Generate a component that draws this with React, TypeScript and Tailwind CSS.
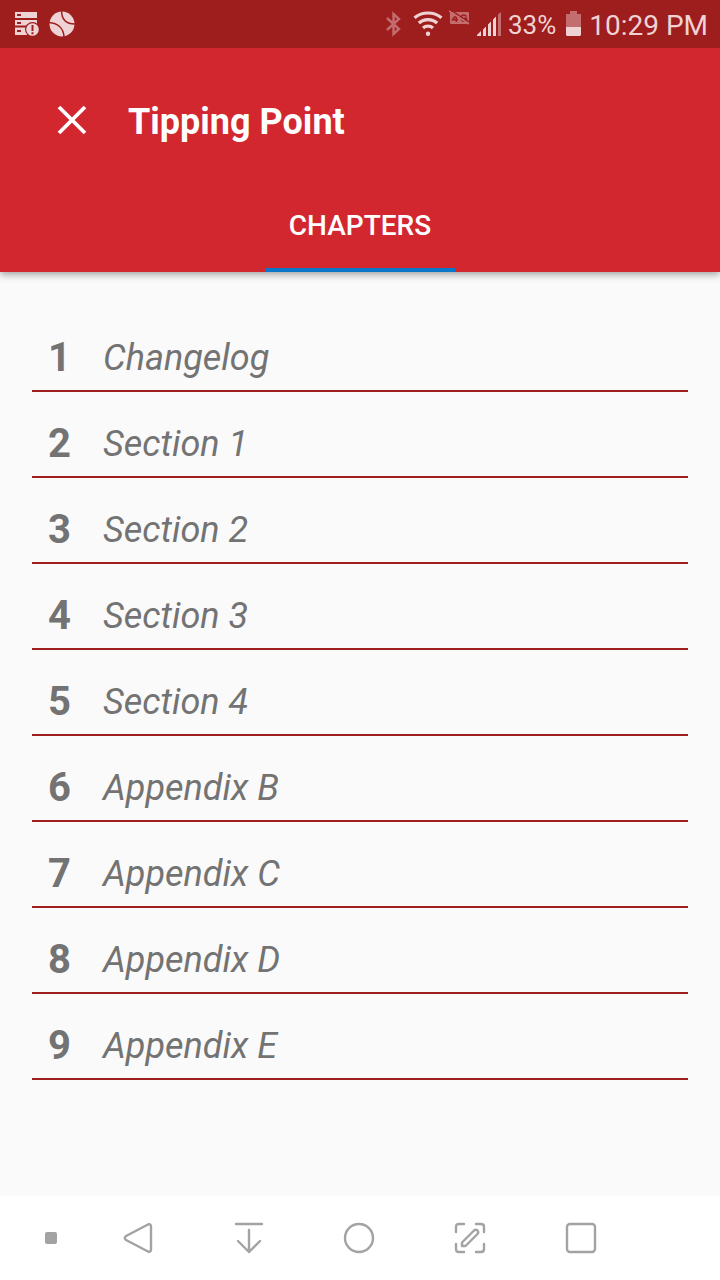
import type { ReactNode } from "react";

const chapters = [
  "Changelog",
  "Section 1",
  "Section 2",
  "Section 3",
  "Section 4",
  "Appendix B",
  "Appendix C",
  "Appendix D",
  "Appendix E",
];

function StorageAlertIcon() {
  return (
    <svg width="26" height="26" viewBox="0 0 26 26" aria-hidden="true">
      <g fill="#efd3d4">
        <path d="M1 1h22v6H1z" />
        <path d="M1 9h22v5.500H1z" />
        <path d="M1 16.500h22V24H1z" />
      </g>
      <g fill="#9e1d1d">
        <path d="M3 3h4v2H3zM3 11h4v2H3zM3 19h4v2H3z" />
        <circle cx="18.5" cy="18.5" r="7.500" />
      </g>
      <circle cx="18.5" cy="18.5" r="6.3" fill="#efd3d4" />
      <path d="M17.500 14h2v6h-2zM17.500 21.200h2v2h-2z" fill="#9e1d1d" />
    </svg>
  );
}

function BallIcon() {
  return (
    <svg width="26" height="26" viewBox="0 0 26 26" aria-hidden="true">
      <circle cx="13" cy="13" r="12.5" fill="#efd3d4" />
      <g fill="none" stroke="#9e1d1d" strokeWidth="1.5">
        <path d="M12.6 0C12.6 8.5 17.5 13 26 13" />
        <path d="M0 11.6C8.5 12.2 14.5 17 15 26" />
      </g>
    </svg>
  );
}

function BluetoothIcon() {
  return (
    <svg width="16" height="26" viewBox="0 0 16 26" fill="none" stroke="#c46d6e" strokeWidth="2.400" aria-hidden="true">
      <path d="M2 7 14 18 8.500 23V3L14 8 2 19" />
    </svg>
  );
}

function WifiIcon() {
  return (
    <svg width="30" height="26" viewBox="0 0 30 26" fill="none" stroke="#efd3d4" strokeWidth="3.200" aria-hidden="true">
      <path d="M1.500 6.800C9 .4 21 .4 28.500 6.800M5.800 12C11 7.400 19 7.400 24.200 12M10 17c2.800-2.500 7.200-2.500 10 0" />
      <circle cx="15" cy="22.700" r="2.200" fill="#efd3d4" stroke="none" />
    </svg>
  );
}

function NoDataIcon() {
  return (
    <svg width="22" height="16" viewBox="0 0 22 16" aria-hidden="true">
      <rect x="1" y="2" width="19" height="12" rx="1" fill="#c46d6e" />
      <path d="M7.300 12V5L3.500 9.800H9M17.500 6.500Q16 4.700 14 5q-2 .8-2 3t2 3.200q2 .3 3.500-1V8.300H15" fill="none" stroke="#9e1d1d" strokeWidth="1.600" />
      <path d="M1.500 0 21 12.700" stroke="#9e1d1d" strokeWidth="1.400" />
      <path d="M0 1 20 14" stroke="#c46d6e" strokeWidth="1.800" />
    </svg>
  );
}

function SignalIcon() {
  return (
    <svg width="25" height="26" viewBox="0 0 25 26" aria-hidden="true">
      <path
        d="M0 25v-1l4-4v5zM6 18.500l3-3V25H6zM11 13.500l3-3V25h-3zM16 8.500l3-3V25h-3z"
        fill="#efd3d4"
      />
      <path d="M21 3.500 24 1v24h-3z" fill="#c46d6e" />
    </svg>
  );
}

function BatteryIcon() {
  return (
    <svg width="15" height="26" viewBox="0 0 15 26" aria-hidden="true">
      <path d="M0 3h4V0h7v3h4v13H0z" fill="#c46d6e" />
      <path d="M0 16h15v8l-1 1H1l-1-1z" fill="#efd3d4" />
    </svg>
  );
}

function NavButton({ label, children }: { label: string; children: ReactNode }) {
  return (
    <button type="button" aria-label={label} className="flex h-full flex-1 items-center justify-center">
      <svg
        width="32"
        height="32"
        viewBox="0 0 32 32"
        fill="none"
        stroke="#a3a3a3"
        strokeWidth="2.400"
        strokeLinecap="round"
        strokeLinejoin="round"
        aria-hidden="true"
      >
        {children}
      </svg>
    </button>
  );
}

export default function App() {
  return (
    <div className="flex min-h-screen flex-col bg-[#fafafa] font-['Roboto',sans-serif]">
      <div className="relative z-10 flex h-12 items-center bg-[#9e1d1d] pr-3 pl-3.5 text-[#efd3d4]">
        <div className="flex flex-1 items-center gap-[9px]">
          <StorageAlertIcon />
          <BallIcon />
        </div>
        <div className="flex items-center">
          <BluetoothIcon />
          <span className="ml-3">
            <WifiIcon />
          </span>
          <span className="ml-1.5 pb-3">
            <NoDataIcon />
          </span>
          <span className="ml-1.5">
            <SignalIcon />
          </span>
          <span className="ml-1.5 pt-0.5 text-[26px] leading-8">33%</span>
          <span className="ml-2.5">
            <BatteryIcon />
          </span>
          <span className="ml-2 pt-1 text-[28px] leading-8">10:29 PM</span>
        </div>
      </div>

      <header className="relative bg-[#d32730] text-white shadow-[0_2px_8px_rgba(0,0,0,0.4)]">
        <div className="flex h-32 items-center pt-4 pl-14">
          <button type="button" aria-label="Close" className="flex size-8 items-center justify-center">
            <svg width="32" height="32" viewBox="0 0 32 32" stroke="white" strokeWidth="3.800" aria-hidden="true">
              <path d="M3 3 29 29M29 3 3 29" />
            </svg>
          </button>
          <h1 className="ml-10 pt-1 text-[36px] leading-[48px] font-bold">Tipping Point</h1>
        </div>
        <div role="tablist" className="flex h-24 justify-center">
          <button
            type="button"
            role="tab"
            aria-selected="true"
            className="h-full border-b-4 border-[#0a78c8] px-6 pt-2 text-[28px] font-medium"
          >
            CHAPTERS
          </button>
        </div>
      </header>

      <main className="flex-1 px-8 pt-[34px]">
        <ol>
          {chapters.map((title, i) => (
            <li key={title} className="border-b-2 border-[#9e1d1d]">
              <a href={`#chapter-${i + 1}`} className="flex h-[84px] items-center pt-[19px] pl-4 text-[#737373]">
                <span className="w-[55px] text-[40px] leading-[48px] font-bold">{i + 1}</span>
                <span className="text-[36px] leading-[48px] italic">{title}</span>
              </a>
            </li>
          ))}
        </ol>
      </main>

      <nav aria-label="System" className="flex h-[84px] items-center bg-white pr-[84px]">
        <button type="button" aria-label="Pin navigation bar" className="flex h-full w-[83px] items-center pl-[45px]">
          <span className="size-3 rounded-xs bg-[#a3a3a3]" />
        </button>
        <NavButton label="Back">
          <path d="M26 2.500 4 14q-2.500 2 0 4L26 29.500q3 1 3-2v-23q0-3-3-2z" />
        </NavButton>
        <NavButton label="Show notifications">
          <path d="M3 2h26M16 8v22M5 19l11 11 11-11" />
        </NavButton>
        <NavButton label="Home">
          <circle cx="16" cy="16" r="14" />
        </NavButton>
        <NavButton label="Capture and edit">
          <path d="M2 10V5q0-3 3-3h5M22 2h5q3 0 3 3v5M30 22v5q0 3-3 3h-5M10 30H5q-3 0-3-3v-5" />
          <path d="M8 20.500 20 8.500q2-1.500 3.500 0t0 3.500L11.500 24H8z" />
        </NavButton>
        <NavButton label="Recent apps">
          <rect x="2" y="2" width="28" height="28" rx="3" />
        </NavButton>
      </nav>
    </div>
  );
}
